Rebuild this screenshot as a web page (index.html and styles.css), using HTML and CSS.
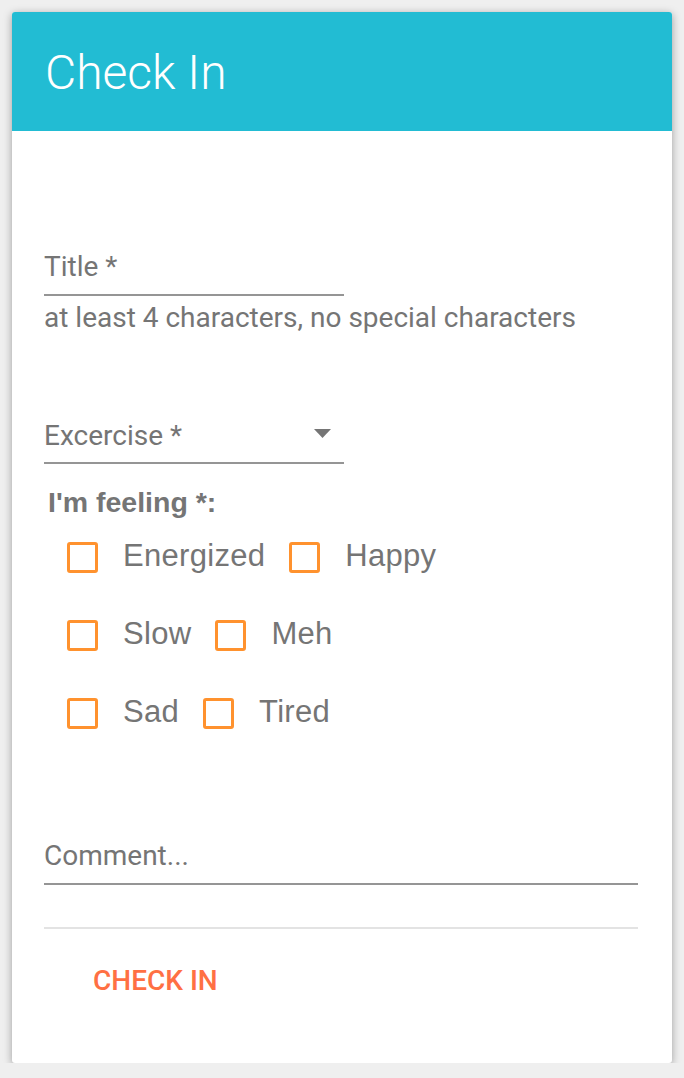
FILE: index.html
```html
<!DOCTYPE html>
<html>
<head>
<meta charset="utf-8">
<link rel="stylesheet" href="styles.css">
</head>
<body>
<div class="card">
  <div class="card-header"><h1 class="card-title">Check In</h1></div>
  <form class="card-body">
    <div class="field field-short">
      <span class="field-label">Title *</span>
    </div>
    <div class="helper">at least 4 characters, no special characters</div>

    <div class="field field-short field-select">
      <span class="field-label">Excercise *</span>
      <svg class="arrow" width="17" height="9" viewBox="0 0 17 9"><path d="M0 0 H17 L8.5 9 Z" fill="#757575"/></svg>
    </div>

    <div class="group-label">I'm feeling *:</div>
    <div class="checks">
      <div class="check-row">
        <label class="check"><span class="box"></span><span class="check-text">Energized</span></label>
        <label class="check"><span class="box"></span><span class="check-text">Happy</span></label>
      </div>
      <div class="check-row">
        <label class="check"><span class="box"></span><span class="check-text">Slow</span></label>
        <label class="check"><span class="box"></span><span class="check-text">Meh</span></label>
      </div>
      <div class="check-row">
        <label class="check"><span class="box"></span><span class="check-text">Sad</span></label>
        <label class="check"><span class="box"></span><span class="check-text">Tired</span></label>
      </div>
    </div>

    <div class="field field-full">
      <span class="field-label">Comment...</span>
    </div>
    <div class="divider"></div>
    <div class="actions"><span class="btn">CHECK IN</span></div>
  </form>
</div>
</body>
</html>
```
FILE: styles.css
```css
html, body {
  margin: 0;
  padding: 0;
}
body {
  background: #efefef;
  font-family: Roboto, "Liberation Sans", sans-serif;
  color: #757575;
}
.card {
  margin: 12px 12px 0 12px;
  width: 660px;
  height: 1051px;
  background: #fff;
  border-radius: 3px;
  overflow: hidden;
  box-shadow: 0 2px 8px rgba(0,0,0,0.35);
  display: flex;
  flex-direction: column;
}
.card-header {
  background: #22bcd3;
  height: 119px;
  padding: 32px 0 0 33px;
  box-sizing: border-box;
}
.card-title {
  margin: 0;
  font-family: Roboto, sans-serif;
  font-weight: 300;
  font-size: 48px;
  line-height: normal;
  color: #fff;
}
.card-body {
  margin: 0;
  padding: 0 34px 0 32px;
  display: flex;
  flex-direction: column;
}
.field {
  display: flex;
  align-items: center;
  justify-content: space-between;
  border-bottom: 2px solid #959595;
  padding-bottom: 11px;
}
.field-short {
  width: 300px;
}
.field-full {
  margin-top: 107px;
}
.field:first-child {
  margin-top: 120px;
}
.field-label {
  font-size: 28px;
  line-height: 32px;
  color: #757575;
}
.field-select {
  margin-top: 86px;
  padding-bottom: 10px;
}
.arrow {
  margin-right: 13px;
  margin-top: -6px;
}
.helper {
  margin-top: 6px;
  font-size: 28px;
  line-height: 32px;
  color: #757575;
}
.group-label {
  margin-top: 22px;
  margin-left: 4px;
  font-family: "Liberation Sans", Arial, sans-serif;
  font-weight: bold;
  font-size: 28.5px;
  line-height: 32px;
  color: #757575;
}
.checks {
  margin-top: 19px;
  padding-left: 23px;
  display: flex;
  flex-direction: column;
  gap: 38px;
}
.check-row {
  display: flex;
  align-items: center;
  height: 40px;
}
.check {
  display: flex;
  align-items: center;
  margin-right: 24px;
}
.box {
  width: 31px;
  height: 31px;
  box-sizing: border-box;
  border: 3px solid #ff922e;
  border-radius: 3px;
  margin-right: 25px;
}
.check-text {
  font-family: "Liberation Sans", Arial, sans-serif;
  font-size: 31px;
  line-height: 40px;
  letter-spacing: 0.3px;
  color: #757575;
  margin-top: -3px;
}
.divider {
  margin-top: 42px;
  height: 2px;
  background: #e3e3e3;
}
.actions {
  margin-top: 36px;
  padding-left: 49px;
}
.btn {
  font-family: Roboto, sans-serif;
  font-weight: 500;
  font-size: 28px;
  line-height: 32px;
  color: #ff7043;
}
```
